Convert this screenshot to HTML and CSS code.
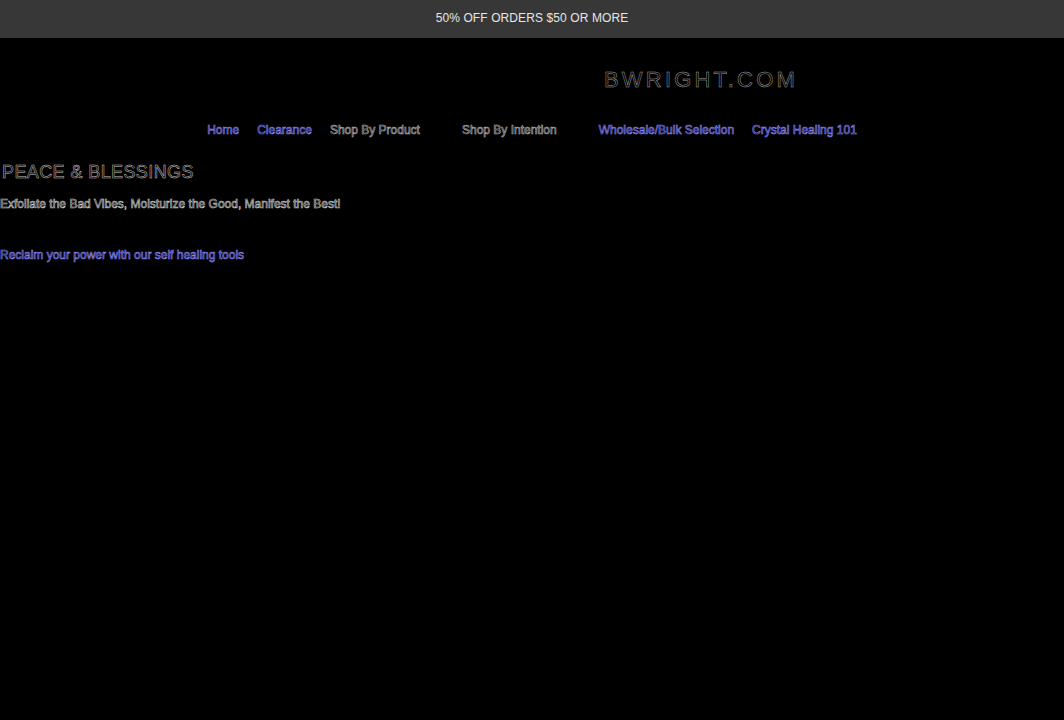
FILE: index.html
```html
<!DOCTYPE html>
<html lang="en">
<head>
  <meta charset="UTF-8">
  <title>Peace &amp; Blessings</title>
  <link rel="stylesheet" href="styles.css">
</head>
<body>

  <div class="announcement">50% OFF ORDERS $50 OR MORE</div>

  <header class="site-header">
    <a href="#" class="logo">BWRIGHT.COM</a>
  </header>

  <nav class="main-nav">
    <a href="#" class="nav-link">Home</a>
    <a href="#" class="nav-link">Clearance</a>
    <span class="nav-link dropdown">Shop By Product<span class="caret">&#9662;</span></span>
    <span class="nav-link dropdown">Shop By Intention<span class="caret">&#9662;</span></span>
    <a href="#" class="nav-link">Wholesale/Bulk Selection</a>
    <a href="#" class="nav-link">Crystal Healing 101</a>
  </nav>

  <div class="content">
    <h1 class="page-title">PEACE &amp; BLESSINGS</h1>
    <p class="tagline">Exfoliate the Bad Vibes, Moisturize the Good, Manifest the Best!</p>
    <a href="#" class="cta-link">Reclaim your power with our self healing tools</a>
  </div>

</body>
</html>
```

FILE: styles.css
```css
html, body {
  margin: 0;
  padding: 0;
  background: #000;
  font-family: "Liberation Sans", Arial, sans-serif;
}

.announcement {
  height: 38px;
  line-height: 37px;
  background: #373737;
  color: #e6e6e6;
  text-align: center;
  font-size: 12px;
  letter-spacing: 0.1px;
}

.site-header {
  display: flex;
  justify-content: center;
  padding: 27px 0 0 338px;
  height: 43px;
}

.logo {
  font-size: 22px;
  letter-spacing: 3.2px;
  line-height: 30px;
  color: transparent;
  -webkit-text-stroke: 0.5px #a0a0a0;
  text-decoration: none;
}

.main-nav {
  display: flex;
  justify-content: center;
  gap: 18px;
  padding-top: 10px;
  height: 24px;
  align-items: center;
}

.nav-link {
  font-size: 12px;
  color: transparent;
  -webkit-text-stroke: 0.6px #b4b4b4;
  text-decoration: none;
}

a.nav-link {
  -webkit-text-stroke: 0.6px #8c89ff;
}

.dropdown {
  display: flex;
  align-items: center;
}

.caret {
  width: 24px;
  text-align: center;
  color: #000;
  -webkit-text-stroke: 0;
}

.content {
  padding: 0 0 0 2px;
}

.page-title {
  margin: 18px 0 0;
  font-size: 18px;
  font-weight: normal;
  letter-spacing: 0.4px;
  line-height: 24px;
  color: transparent;
  -webkit-text-stroke: 0.5px #c4c4c4;
}

.tagline {
  margin: 12px 0 0 -2px;
  font-size: 12px;
  line-height: 16px;
  color: transparent;
  -webkit-text-stroke: 0.6px #c8c8c8;
}

.cta-link {
  display: block;
  margin: 35px 0 0 -2px;
  font-size: 12px;
  line-height: 16px;
  color: transparent;
  -webkit-text-stroke: 0.6px #8c89ff;
  text-decoration: none;
}
```
